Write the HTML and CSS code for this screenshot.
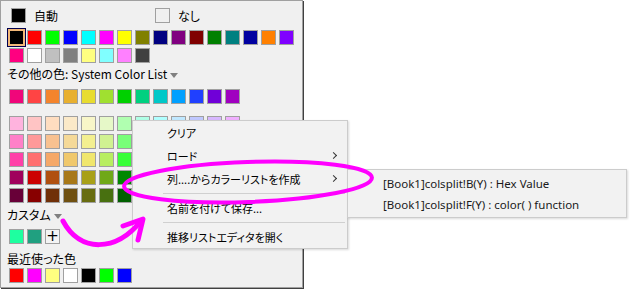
FILE: index.html
```html
<!DOCTYPE html>
<html lang="ja">
<head>
    <meta charset="UTF-8">
    <title>Color Picker</title>
    <link rel="stylesheet" href="styles.css">
</head>
<body>
    <div class="panel">
        <div class="auto-row">
            <div class="auto-item"><span class="swatch black"></span><span>自動</span></div>
            <div class="auto-item"><span class="swatch empty"></span><span>なし</span></div>
        </div>
        <div class="swatch-row first" data-colors="#ff0000,#00ff00,#0000ff,#00ffff,#ff00ff,#ffff00,#808000,#000080,#800080,#800000,#008000,#008080,#0000a0,#ff8000,#8000ff">
            <span class="swatch selected"></span>
        </div>
        <div class="swatch-row" data-colors="#ff0080,#ffffff,#c0c0c0,#808080,#ffff80,#80ffff,#ff80ff,#404040"></div>

        <p class="label">その他の色: System Color List<span class="drop"></span></p>
        <div class="swatch-row sys" data-colors="#f0067a,#ff4444,#f4842c,#e8b030,#e8dc30,#a0e030,#00d000,#00d080,#00c8c8,#00a0ff,#2040ff,#7000d8,#a000c0"></div>

        <div class="grid">
            <div class="swatch-row" data-colors="#ffb3de,#ffc4c4,#ffddc0,#fbe9c8,#f8f6c8,#e6f8c8,#b0ffb0,#b0ffe6,#b0ffff,#c0e8ff,#c0c8ff,#d8b8ff,#f0b0ff"></div>
            <div class="swatch-row" data-colors="#ff80c8,#ff9999,#f8c190,#f5d998,#f3ef90,#d0f291,#78ff78,#78ffd0,#78ffff,#88d0ff,#8898ff,#b880ff,#e080ff"></div>
            <div class="swatch-row" data-colors="#ff40a8,#ff7070,#f5a868,#f0c86c,#f0e66c,#b8ee60,#38ff38,#38ffb8,#38ffff,#40b0ff,#4060ff,#9040ff,#d040ff"></div>
            <div class="swatch-row" data-colors="#a0005c,#cc0000,#b05010,#a87818,#a8a018,#70a818,#008800,#008858,#008888,#0060a8,#0020b0,#5000a8,#8800a0"></div>
            <div class="swatch-row" data-colors="#680038,#880000,#703008,#705010,#686c10,#487010,#006000,#006040,#006060,#004078,#001878,#380078,#600070"></div>
        </div>

        <p class="label custom-label">カスタム<span class="drop"></span></p>
        <div class="swatch-row custom" data-colors="#1effa0,#20a080">
        </div>

        <p class="label recent-label">最近使った色</p>
        <div class="swatch-row recent" data-colors="#ff0000,#ff00ff,#ffff80,#ffffff,#000000,#00ff00,#0000ff"></div>
    </div>

    <div class="menu">
        <div class="menu-item">クリア</div>
        <div class="menu-item">ロード<span class="arrow"></span></div>
        <div class="menu-item">列....からカラーリストを作成<span class="arrow"></span></div>
        <div class="menu-sep"></div>
        <div class="menu-item">名前を付けて保存...</div>
        <div class="menu-sep"></div>
        <div class="menu-item">推移リストエディタを開く</div>
    </div>

    <div class="submenu">
        <div class="sub-item">[Book1]colsplit!B(Y) : Hex Value</div>
        <div class="sub-item">[Book1]colsplit!F(Y) : color( ) function</div>
    </div>

    <svg class="marks" width="636" height="291" viewBox="0 0 636 291">
        <ellipse cx="248" cy="182" rx="124" ry="20" transform="rotate(-2 248 182)" fill="none" stroke="#ff00ff" stroke-width="4"/>
        <path d="M63 221 C80 253, 116 252, 141 221" fill="none" stroke="#ff00ff" stroke-width="5" stroke-linecap="round"/>
        <path d="M123 226 L143 219 L138 240" fill="none" stroke="#ff00ff" stroke-width="5" stroke-linecap="round" stroke-linejoin="round"/>
    </svg>

    <script>
document.querySelectorAll("[data-colors]").forEach((row) => {
    row.dataset.colors.split(",").forEach((c) => {
        let s = document.createElement("span");
        s.className = "swatch";
        s.style.background = c;
        row.appendChild(s);
    });
});

// plus button after the custom colors
let plus = document.createElement("span");
plus.className = "swatch plus";
plus.innerText = "+";
document.querySelector(".custom").appendChild(plus);
    </script>
</body>
</html>
```

FILE: styles.css
```css
* {
    margin: 0;
    padding: 0;
    box-sizing: border-box;
}

body {
    position: relative;
    width: 636px;
    height: 291px;
    overflow: hidden;
    background: #fff;
    font-family: "Noto Sans CJK JP", sans-serif;
    font-size: 12px;
    font-feature-settings: "palt";
    color: #000;
}

.panel {
    width: 303px;
    height: 288px;
    background: #f0f0f0;
    border: 1px solid #a0a0a0;
    box-shadow: 1px 1px 0 #404040;
    padding-top: 7px;
}

.auto-row {
    display: flex;
    padding-left: 10px;
    height: 15px;
}

.auto-item {
    width: 144px;
    display: flex;
    align-items: center;
    gap: 8px;
    line-height: 15px;
}

.swatch {
    width: 15px;
    height: 15px;
    border: 1px solid #a0a0a0;
    flex: none;
}

.black {
    background: #000;
}

.empty {
    background: #f0f0f0;
}

.swatch-row {
    display: flex;
    align-items: flex-start;
    gap: 3px;
    padding-left: 8px;
    height: 15px;
    margin-top: 3px;
}

.swatch-row.first {
    margin-top: 7px;
}

.selected {
    width: 19px;
    height: 19px;
    margin: -2px -2px 0 -2px;
    border: 1px solid #000050;
    background: #000;
    box-shadow: inset 0 0 0 2px #f2b878;
}

.label {
    padding-left: 6px;
    margin-top: 4px;
    line-height: 14px;
    height: 14px;
    display: flex;
    align-items: center;
}

.drop {
    width: 0;
    height: 0;
    margin-left: 3px;
    margin-top: 2px;
    border-left: 4px solid transparent;
    border-right: 4px solid transparent;
    border-top: 5px solid #808080;
}

.swatch-row.sys {
    margin-top: 8px;
}

.grid {
    margin-top: 12px;
}

.custom-label {
    margin-top: 5px;
}

.swatch-row.custom {
    margin-top: 7px;
}

.plus {
    background: #f4f4f4;
    display: flex;
    align-items: center;
    justify-content: center;
    font-family: "DejaVu Sans", sans-serif;
    font-size: 15px;
    line-height: 13px;
}

.recent-label {
    margin-top: 8px;
}

.swatch-row.recent {
    margin-top: 2px;
}

.menu {
    position: absolute;
    left: 132px;
    top: 120px;
    width: 216px;
    background: #f2f2f2;
    border: 1px solid #cccccc;
    box-shadow: 1px 1px 2px rgba(0, 0, 0, 0.15);
    font-size: 11px;
}

.menu-item {
    height: 23px;
    display: flex;
    align-items: center;
    justify-content: space-between;
    padding-left: 34px;
    padding-right: 11px;
}

.arrow {
    width: 5px;
    height: 5px;
    border-top: 1px solid #333;
    border-right: 1px solid #333;
    transform: rotate(45deg);
}

.menu-sep {
    height: 6px;
    display: flex;
    align-items: center;
    margin-left: 30px;
    margin-right: 2px;
}

.menu-sep::before {
    content: "";
    flex: 1;
    height: 1px;
    background: #d0d0d0;
}

.submenu {
    position: absolute;
    left: 347px;
    top: 169px;
    width: 280px;
    background: #f2f2f2;
    border: 1px solid #cccccc;
    box-shadow: 1px 1px 2px rgba(0, 0, 0, 0.15);
    padding: 3px 0 2px;
}

.sub-item {
    height: 21px;
    display: flex;
    align-items: center;
    padding-left: 35px;
    font-family: "Noto Sans", sans-serif;
    font-size: 11.5px;
    color: #1a1a1a;
}

.marks {
    position: absolute;
    left: 0;
    top: 0;
    pointer-events: none;
}
```
